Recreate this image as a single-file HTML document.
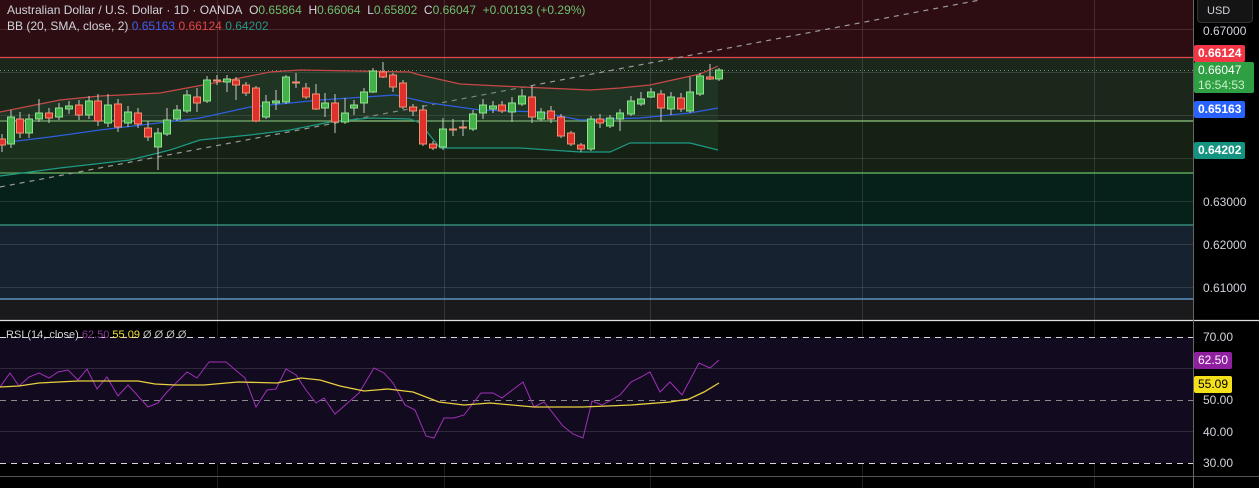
<!DOCTYPE html>
<html><head><meta charset="utf-8"><style>
html,body{margin:0;padding:0;background:#000;}
body{width:1259px;height:488px;overflow:hidden;position:relative;font-family:"Liberation Sans",sans-serif;}
.t{position:absolute;font-size:12px;white-space:nowrap;}
.ax{position:absolute;left:1203px;font-size:12px;color:#d1d4dc;}
.bx{position:absolute;left:1194px;padding:0 4px;height:17px;line-height:17px;font-size:12px;color:#fff;border-radius:2px;}
</style></head><body>
<svg width="1259" height="488" style="position:absolute;left:0;top:0">
<rect x="0" y="0" width="1193" height="57" fill="#2d0d12"/>
<rect x="0" y="57" width="1193" height="64" fill="#1c271c"/>
<rect x="0" y="121" width="1193" height="52" fill="#152112"/>
<rect x="0" y="173" width="1193" height="52" fill="#06201a"/>
<rect x="0" y="225" width="1193" height="74" fill="#16222f"/>
<rect x="0" y="299" width="1193" height="21" fill="#1a1a1c"/>
<g stroke="#ffffff" stroke-opacity="0.12" stroke-width="1">
<line x1="0" y1="72.5" x2="1193" y2="72.5"/><line x1="0" y1="115.5" x2="1193" y2="115.5"/>
<line x1="0" y1="158.5" x2="1193" y2="158.5"/><line x1="0" y1="201.5" x2="1193" y2="201.5"/>
<line x1="0" y1="244.5" x2="1193" y2="244.5"/><line x1="0" y1="287.5" x2="1193" y2="287.5"/>
<line x1="0" y1="29.5" x2="1193" y2="29.5"/>
<line x1="217.5" y1="0" x2="217.5" y2="488"/><line x1="444.5" y1="0" x2="444.5" y2="488"/>
<line x1="650.5" y1="0" x2="650.5" y2="488"/><line x1="862.5" y1="0" x2="862.5" y2="488"/>
<line x1="1094.5" y1="0" x2="1094.5" y2="488"/>
</g>
<line x1="0" y1="57.5" x2="1193" y2="57.5" stroke="#e04848" stroke-width="1.3"/>
<line x1="0" y1="70.5" x2="1193" y2="70.5" stroke="#6a9a70" stroke-dasharray="1 3"/>
<line x1="0" y1="121" x2="1193" y2="121" stroke="#8fca80" stroke-width="1.3"/>
<line x1="0" y1="173" x2="1193" y2="173" stroke="#6cc068" stroke-width="1.3"/>
<line x1="0" y1="225" x2="1193" y2="225" stroke="#3aa08a" stroke-width="1.3"/>
<line x1="0" y1="299" x2="1193" y2="299" stroke="#6aa8e0" stroke-width="1.3"/>
<line x1="0" y1="187" x2="980" y2="0" stroke="#9a9a9a" stroke-width="1.2" stroke-dasharray="5 5"/>
<!-- BB fill -->
<polygon fill="#2a5a3a" fill-opacity="0.25" points="0,112 60,100 100,96 160,93 230,80 270,72 300,70 410,72 420,75 460,84 500,86 590,90 620,88 650,85 700,74 718,66 718,150 690,143 630,143 610,152 580,152 520,148 440,148 415,120 370,118 290,130 200,140 130,160 60,168 0,176"/>
<polyline fill="none" stroke="#c84848" stroke-width="1.2" points="0,112 60,100 100,96 160,93 230,80 270,72 300,70 410,72 420,75 460,84 500,86 590,90 620,88 650,85 700,74 718,66"/>
<polyline fill="none" stroke="#2e5ee0" stroke-width="1.3" points="0,143 50,137 100,130 150,124 200,118 250,107 320,100 395,95 430,103 480,110 540,112 580,120 610,119 640,118 690,113 718,108"/>
<polyline fill="none" stroke="#1f9a86" stroke-width="1.2" points="0,176 60,168 130,160 170,150 200,140 250,135 290,130 330,122 370,118 410,119 420,123 440,148 520,148 580,152 610,152 630,143 690,143 718,150"/>
<!-- candles -->
<g stroke-width="1">
<g stroke="#c8c8c8">
<line x1="2" y1="134" x2="2" y2="152"/><line x1="11" y1="110" x2="11" y2="148"/><line x1="20" y1="112" x2="20" y2="138"/><line x1="29" y1="114" x2="29" y2="138"/><line x1="39" y1="99" x2="39" y2="122"/><line x1="49" y1="108" x2="49" y2="123"/><line x1="59" y1="103" x2="59" y2="120"/><line x1="69" y1="101" x2="69" y2="114"/><line x1="79" y1="100" x2="79" y2="120"/><line x1="89" y1="96" x2="89" y2="119"/><line x1="98" y1="94" x2="98" y2="126"/><line x1="108" y1="94" x2="108" y2="127"/><line x1="118" y1="99" x2="118" y2="132"/><line x1="128" y1="106" x2="128" y2="127"/><line x1="138" y1="108" x2="138" y2="128"/><line x1="148" y1="121" x2="148" y2="141"/><line x1="158" y1="128" x2="158" y2="170"/><line x1="167" y1="108" x2="167" y2="136"/><line x1="177" y1="105" x2="177" y2="121"/><line x1="187" y1="90" x2="187" y2="113"/><line x1="197" y1="88" x2="197" y2="112"/><line x1="207" y1="76" x2="207" y2="103"/><line x1="217" y1="75" x2="217" y2="85"/><line x1="227" y1="75" x2="227" y2="92"/><line x1="236" y1="77" x2="236" y2="100"/><line x1="246" y1="82" x2="246" y2="96"/><line x1="256" y1="86" x2="256" y2="122"/><line x1="266" y1="95" x2="266" y2="119"/><line x1="276" y1="90" x2="276" y2="110"/><line x1="286" y1="75" x2="286" y2="104"/><line x1="296" y1="73" x2="296" y2="88"/><line x1="306" y1="83" x2="306" y2="99"/><line x1="316" y1="84" x2="316" y2="110"/><line x1="325" y1="93" x2="325" y2="117"/><line x1="335" y1="94" x2="335" y2="133"/><line x1="345" y1="98" x2="345" y2="124"/><line x1="354" y1="100" x2="354" y2="115"/><line x1="364" y1="88" x2="364" y2="113"/><line x1="373" y1="68" x2="373" y2="93"/><line x1="383" y1="62" x2="383" y2="78"/><line x1="393" y1="73" x2="393" y2="92"/><line x1="403" y1="80" x2="403" y2="109"/><line x1="413" y1="104" x2="413" y2="116"/><line x1="423" y1="105" x2="423" y2="146"/><line x1="433" y1="141" x2="433" y2="150"/><line x1="443" y1="118" x2="443" y2="150"/><line x1="453" y1="119" x2="453" y2="136"/><line x1="463" y1="120" x2="463" y2="136"/><line x1="473" y1="110" x2="473" y2="131"/><line x1="483" y1="99" x2="483" y2="119"/><line x1="493" y1="101" x2="493" y2="113"/><line x1="502" y1="101" x2="502" y2="113"/><line x1="512" y1="97" x2="512" y2="122"/><line x1="522" y1="89" x2="522" y2="106"/><line x1="532" y1="86" x2="532" y2="123"/><line x1="541" y1="108" x2="541" y2="121"/><line x1="551" y1="106" x2="551" y2="123"/><line x1="561" y1="114" x2="561" y2="138"/><line x1="571" y1="131" x2="571" y2="146"/><line x1="581" y1="143" x2="581" y2="152"/><line x1="591" y1="116" x2="591" y2="151"/><line x1="600" y1="114" x2="600" y2="128"/><line x1="610" y1="115" x2="610" y2="128"/><line x1="620" y1="109" x2="620" y2="131"/><line x1="631" y1="96" x2="631" y2="116"/><line x1="641" y1="92" x2="641" y2="106"/><line x1="651" y1="88" x2="651" y2="98"/><line x1="661" y1="90" x2="661" y2="122"/><line x1="671" y1="92" x2="671" y2="115"/><line x1="681" y1="93" x2="681" y2="112"/><line x1="690" y1="77" x2="690" y2="113"/><line x1="700" y1="73" x2="700" y2="96"/><line x1="710" y1="64" x2="710" y2="80"/><line x1="719" y1="68" x2="719" y2="81"/>
</g>
<g fill="#43b04a" stroke="#8fe08f">
<rect x="7.5" y="117" width="7" height="27"/><rect x="25.5" y="119" width="7" height="14"/><rect x="35.5" y="113" width="7" height="6"/><rect x="55.5" y="108" width="7" height="9"/><rect x="65.5" y="106" width="7" height="3"/><rect x="85.5" y="101" width="7" height="14"/><rect x="104.5" y="105" width="7" height="18"/><rect x="124.5" y="112" width="7" height="11"/><rect x="154.5" y="133" width="7" height="14"/><rect x="163.5" y="120" width="7" height="14"/><rect x="173.5" y="110" width="7" height="9"/><rect x="183.5" y="95" width="7" height="16"/><rect x="203.5" y="80" width="7" height="21"/><rect x="223.5" y="79" width="7" height="3"/><rect x="262.5" y="102" width="7" height="15"/><rect x="272.5" y="101" width="7" height="2"/><rect x="282.5" y="77" width="7" height="25"/><rect x="321.5" y="103" width="7" height="5"/><rect x="341.5" y="113" width="7" height="9"/><rect x="350.5" y="105" width="7" height="3"/><rect x="360.5" y="92" width="7" height="11"/><rect x="369.5" y="71" width="7" height="21"/><rect x="439.5" y="129" width="7" height="18"/><rect x="469.5" y="114" width="7" height="15"/><rect x="479.5" y="105" width="7" height="8"/><rect x="489.5" y="106" width="7" height="3"/><rect x="508.5" y="103" width="7" height="9"/><rect x="518.5" y="96" width="7" height="8"/><rect x="537.5" y="112" width="7" height="7"/><rect x="587.5" y="119" width="7" height="30"/><rect x="606.5" y="118" width="7" height="8"/><rect x="616.5" y="113" width="7" height="6"/><rect x="627.5" y="101" width="7" height="13"/><rect x="637.5" y="99" width="7" height="5"/><rect x="647.5" y="92" width="7" height="5"/><rect x="667.5" y="97" width="7" height="12"/><rect x="686.5" y="92" width="7" height="19"/><rect x="696.5" y="76" width="7" height="18"/><rect x="715.5" y="70" width="7" height="9"/>
</g>
<g fill="#e0302c" stroke="#f09070">
<rect x="-1.5" y="139" width="7" height="6"/><rect x="16.5" y="119" width="7" height="14"/><rect x="45.5" y="113" width="7" height="5"/><rect x="75.5" y="105" width="7" height="10"/><rect x="94.5" y="101" width="7" height="20"/><rect x="114.5" y="104" width="7" height="23"/><rect x="134.5" y="113" width="7" height="11"/><rect x="144.5" y="128" width="7" height="9"/><rect x="193.5" y="97" width="7" height="6"/><rect x="213.5" y="80" width="7" height="1"/><rect x="232.5" y="80" width="7" height="5"/><rect x="242.5" y="85" width="7" height="8"/><rect x="252.5" y="88" width="7" height="33"/><rect x="292.5" y="82" width="7" height="1"/><rect x="302.5" y="88" width="7" height="9"/><rect x="312.5" y="94" width="7" height="15"/><rect x="331.5" y="103" width="7" height="19"/><rect x="379.5" y="72" width="7" height="5"/><rect x="389.5" y="75" width="7" height="12"/><rect x="399.5" y="83" width="7" height="24"/><rect x="409.5" y="107" width="7" height="4"/><rect x="419.5" y="110" width="7" height="34"/><rect x="429.5" y="144" width="7" height="4"/><rect x="449.5" y="129" width="7" height="1"/><rect x="459.5" y="127" width="7" height="1"/><rect x="498.5" y="105" width="7" height="6"/><rect x="528.5" y="97" width="7" height="20"/><rect x="547.5" y="111" width="7" height="8"/><rect x="557.5" y="117" width="7" height="19"/><rect x="567.5" y="133" width="7" height="11"/><rect x="577.5" y="145" width="7" height="4"/><rect x="596.5" y="119" width="7" height="4"/><rect x="657.5" y="94" width="7" height="14"/><rect x="677.5" y="98" width="7" height="11"/><rect x="706.5" y="77" width="7" height="2"/>
</g>
</g>
<!-- separator / RSI pane -->
<line x1="0" y1="320.5" x2="1259" y2="320.5" stroke="#e0e0e0" stroke-width="1.2"/>
<rect x="0" y="337" width="1193" height="126" fill="#120a1f"/>
<g stroke="#ffffff" stroke-opacity="0.13"><line x1="0" y1="368.5" x2="1193" y2="368.5"/><line x1="0" y1="431.5" x2="1193" y2="431.5"/></g>
<line x1="0" y1="400.5" x2="1193" y2="400.5" stroke="#8a8a8a" stroke-dasharray="6 5"/>
<line x1="0" y1="337.5" x2="1193" y2="337.5" stroke="#d8d8d8" stroke-dasharray="6 5"/>
<line x1="0" y1="463.5" x2="1193" y2="463.5" stroke="#d8d8d8" stroke-dasharray="6 5"/>
<line x1="0" y1="476.5" x2="1259" y2="476.5" stroke="#555"/>
<polyline fill="none" stroke="#a030b8" stroke-width="1" points="0,387 10,373 19,386 29,377 39,373 49,378 58,372 68,370 78,380 87,369 97,389 107,377 118,396 128,385 148,407 158,403 167,392 187,372 197,378 209,362 226,362 245,378 256,407 267,390 276,389 286,369 296,375 306,390 316,403 324,398 335,414 359,393 374,368 384,373 393,383 405,405 415,410 426,436 434,438 444,418 454,418 464,415 481,393 493,393 502,398 523,382 534,407 544,402 563,426 573,434 583,438 592,401 602,405 620,395 631,382 641,377 650,372 660,392 670,382 682,395 699,363 710,368 719,360"/>
<polyline fill="none" stroke="#e8d040" stroke-width="1.3" points="0,387 19,386 39,383 78,381 112,381 138,381 155,384 175,385 204,385 238,382 277,383 301,378 320,380 340,386 364,391 388,389 413,392 439,402 464,405 490,403 534,407 583,407 631,405 670,402 689,399 704,392 719,383"/>
<line x1="1193.5" y1="0" x2="1193.5" y2="488" stroke="#666"/>
</svg>

<div class="t" style="left:7px;top:3px;color:#d1d4dc">Australian Dollar / U.S. Dollar · 1D · OANDA&nbsp; O<span style="color:#6cc070">0.65864</span>&nbsp; H<span style="color:#6cc070">0.66064</span>&nbsp; L<span style="color:#6cc070">0.65802</span>&nbsp; C<span style="color:#6cc070">0.66047</span>&nbsp; <span style="color:#6cc070">+0.00193 (+0.29%)</span></div>
<div class="t" style="left:7px;top:19px;color:#d1d4dc">BB (20, SMA, close, 2) <span style="color:#3a62f0">0.65163</span> <span style="color:#e04848">0.66124</span> <span style="color:#1f9a86">0.64202</span></div>
<div class="t" style="left:6px;top:329px;color:#d1d4dc;font-size:11px">RSI (14, close) <span style="color:#8a3aa0">62.50</span> <span style="color:#f0e040">55.09</span> <span style="color:#bbb">Ø Ø Ø Ø</span></div>

<div style="position:absolute;left:1197px;top:0;width:56px;height:23px;background:#141414;border:1px solid #333;border-top:none;border-radius:0 0 4px 4px;color:#d1d4dc;font-size:11px;line-height:23px;box-sizing:border-box;padding-left:9px">USD</div>
<div class="ax" style="top:24px">0.67000</div>
<div class="bx" style="top:45px;background:#f23645;font-weight:bold">0.66124</div>
<div style="position:absolute;left:1194px;top:62px;width:60px;height:31px;background:#2ea043;border-radius:2px;color:#fff;font-size:12px;line-height:15px;padding-left:4px;box-sizing:border-box;padding-top:1px">0.66047<br><span style="color:#c8f0c8">16:54:53</span></div>
<div class="bx" style="top:101px;background:#2962ff;font-weight:bold">0.65163</div>
<div class="bx" style="top:142px;background:#149480;font-weight:bold">0.64202</div>
<div class="ax" style="top:195px">0.63000</div>
<div class="ax" style="top:238px">0.62000</div>
<div class="ax" style="top:281px">0.61000</div>
<div class="ax" style="top:330px">70.00</div>
<div class="bx" style="top:352px;background:#9020a0">62.50</div>
<div class="bx" style="top:376px;background:#f5e11a;color:#000">55.09</div>
<div class="ax" style="top:393px">50.00</div>
<div class="ax" style="top:425px">40.00</div>
<div class="ax" style="top:456px">30.00</div>
</body></html>
